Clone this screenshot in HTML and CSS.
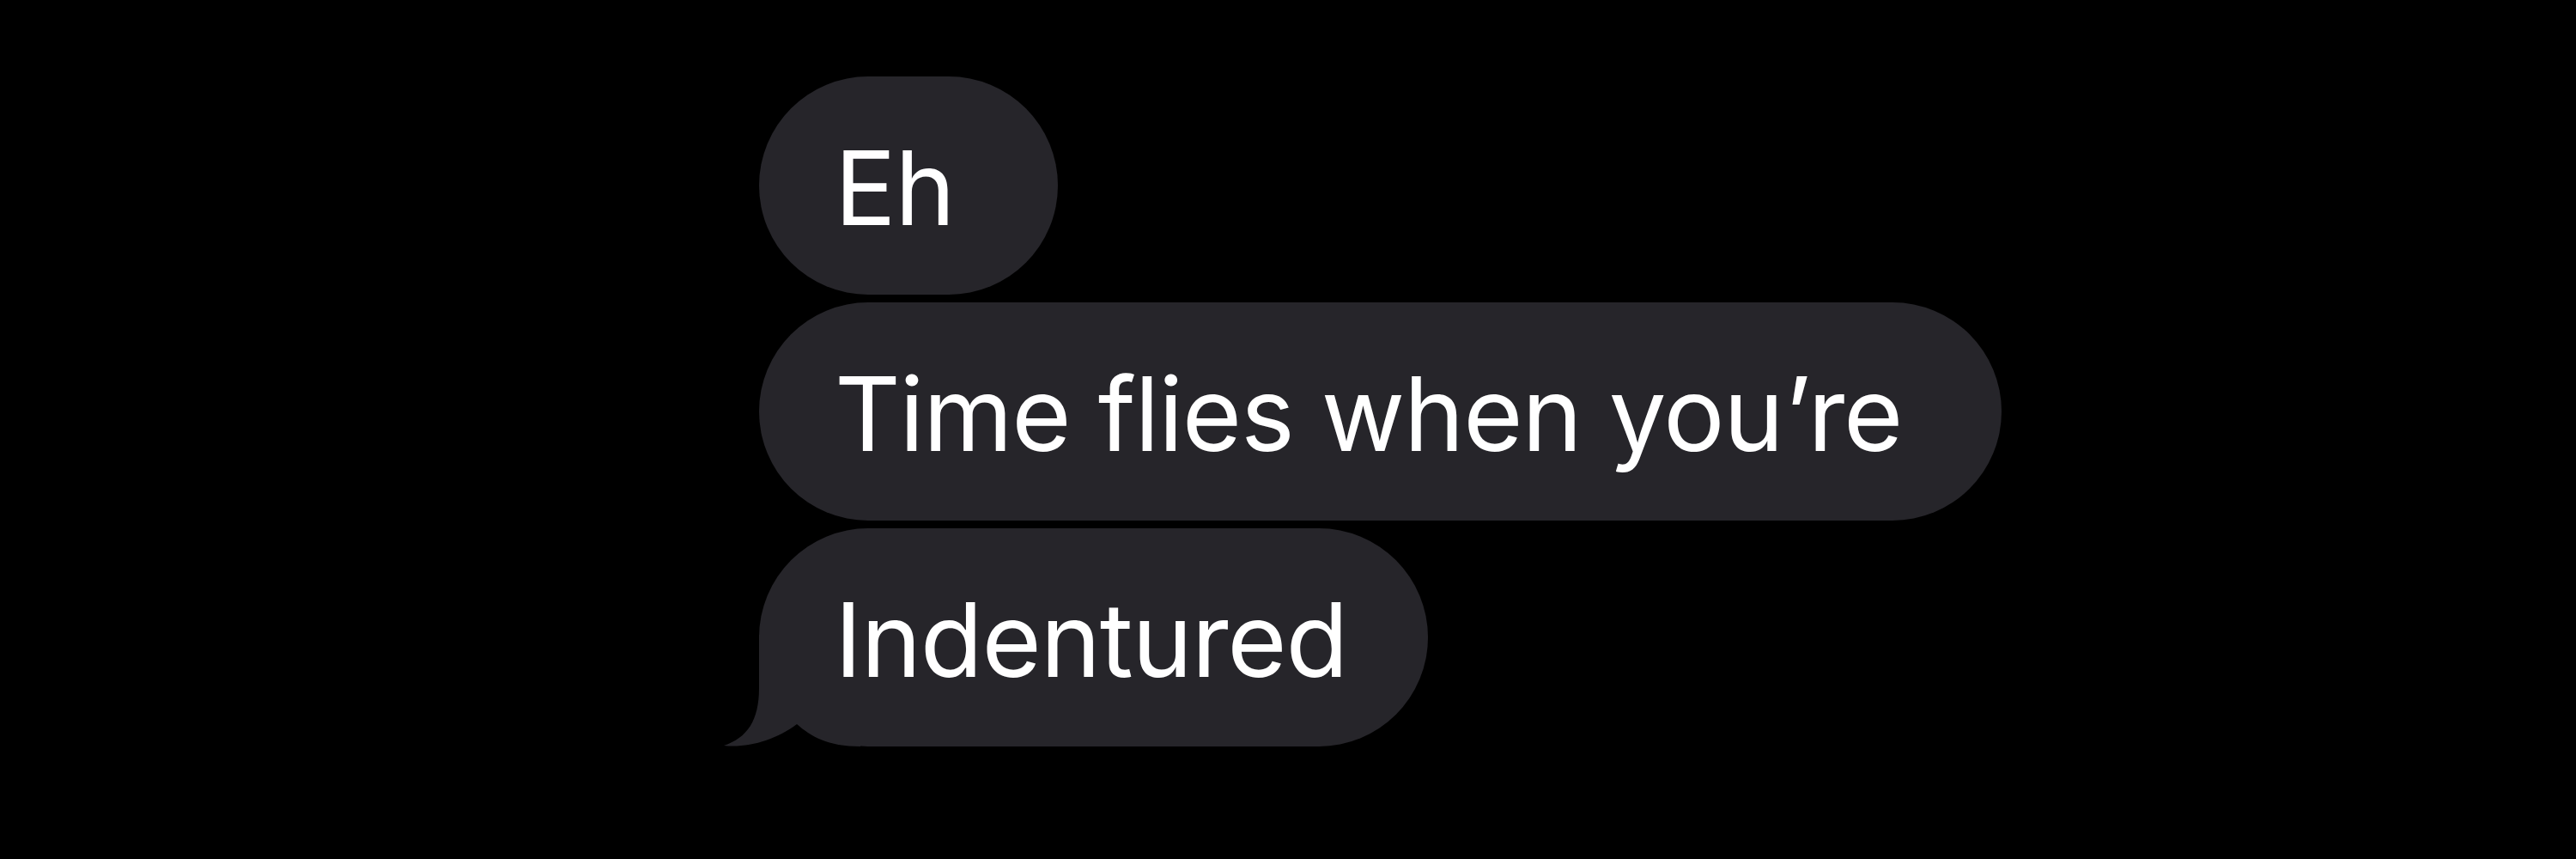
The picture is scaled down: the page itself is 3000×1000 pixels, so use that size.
FILE: index.html
```html
<!DOCTYPE html>
<html lang="en">
<head>
<meta charset="utf-8">
<title>Messages</title>
<link rel="stylesheet" href="styles.css">
</head>
<body>
<main class="thread">
  <div class="bubble bubble-eh"><span class="text">Eh</span></div>
  <div class="bubble bubble-time"><span class="text">Time flies when you’re</span></div>
  <div class="bubble bubble-last">
    <svg class="tail" width="160" height="130" viewBox="0 0 160 130" aria-hidden="true">
      <path d="M42 0 L42 62 C42 100 28 120 1 129 C30 132 62 122 86 104 C102 118 122 130 160 130 L160 0 Z" fill="#26252a"/>
    </svg>
    <span class="text">Indentured</span>
  </div>
</main>
</body>
</html>
```
FILE: styles.css
```css
html, body {
  margin: 0;
  padding: 0;
  background: #000;
}
body {
  width: 3000px;
  height: 1000px;
  overflow: hidden;
  font-family: Inter, "Noto Sans", "Liberation Sans", sans-serif;
}
.thread {
  display: flex;
  flex-direction: column;
  align-items: flex-start;
  gap: 9px;
  padding: 89px 0 0 884px;
}
.bubble {
  position: relative;
  box-sizing: border-box;
  height: 254px;
  display: flex;
  align-items: center;
  padding: 6px 116px 0 88px;
  border-radius: 127px;
  background: #26252a;
  color: #fff;
  font-size: 119px;
  font-weight: 400;
  letter-spacing: -1.2px;
  white-space: nowrap;
}
.bubble-eh {
  padding-right: 120px;
}
.bubble-last {
  padding-right: 94px;
}
.text {
  position: relative;
}
.tail {
  position: absolute;
  left: -42px;
  bottom: 0;
}
```
